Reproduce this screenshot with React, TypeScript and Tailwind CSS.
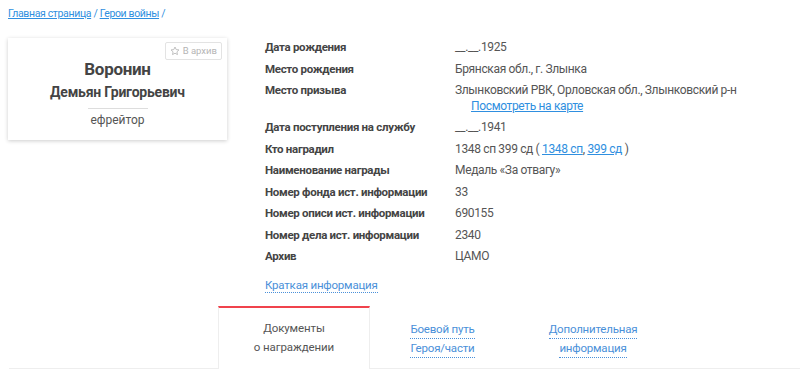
import React from "react";

const rows: { label: string; value: React.ReactNode; extra?: boolean }[] = [
  { label: "Дата рождения", value: "__.__.1925" },
  { label: "Место рождения", value: "Брянская обл., г. Злынка" },
  {
    label: "Место призыва",
    value: "Злынковский РВК, Орловская обл., Злынковский р-н",
    extra: true,
  },
  { label: "Дата поступления на службу", value: "__.__.1941" },
  {
    label: "Кто наградил",
    value: (
      <>
        1348 сп 399 сд ({" "}
        <a className="text-[#2f8fe0] underline">1348 сп</a>,{" "}
        <a className="text-[#2f8fe0] underline">399 сд</a> )
      </>
    ),
  },
  { label: "Наименование награды", value: "Медаль «За отвагу»" },
  { label: "Номер фонда ист. информации", value: "33" },
  { label: "Номер описи ист. информации", value: "690155" },
  { label: "Номер дела ист. информации", value: "2340" },
  { label: "Архив", value: "ЦАМО" },
];

function Star() {
  return (
    <svg width="10" height="10" viewBox="0 0 24 24" fill="none" stroke="#b5b5b5" strokeWidth="2" strokeLinejoin="round">
      <path d="M12 2.5l2.9 6.1 6.6.8-4.9 4.6 1.3 6.6L12 17.3l-5.9 3.3 1.3-6.6-4.9-4.6 6.6-.8z" />
    </svg>
  );
}

export default function App() {
  return (
    <div
      className="w-[800px] h-[379px] bg-white overflow-hidden text-[#555] whitespace-nowrap"
      style={{ fontFamily: "Roboto, 'Noto Sans', sans-serif" }}
    >
      <div className="pt-[6px] pl-[8px] text-[10.5px] leading-[16px] tracking-[-0.35px] text-[#2f8fe0]">
        <a className="underline">Главная страница</a> / <a className="underline">Герои войны</a> /
      </div>
      <div className="flex mt-[16px]">
        <div className="w-[219px] ml-[8px] h-[102px] bg-white shadow-[0_1px_4px_rgba(0,0,0,0.2)] relative flex flex-col items-center shrink-0">
          <div className="absolute top-[4px] right-[5px] h-[18px] px-[4px] border border-[#e3e3e3] rounded-[2px] flex items-center gap-[3px] text-[9.5px] text-[#b5b5b5]">
            <Star />
            <span>В архив</span>
          </div>
          <div className="mt-[18px] text-[17px] leading-[26px] font-bold text-[#444] tracking-[-0.3px]">Воронин</div>
          <div className="text-[14px] leading-[20px] font-bold text-[#444] tracking-[-0.2px]">Демьян Григорьевич</div>
          <div className="w-[60px] h-px bg-[#ddd] mt-[6px]" />
          <div className="mt-[2px] text-[12px] leading-[18px] text-[#555]">ефрейтор</div>
        </div>
        <div className="ml-[38px] -mt-[1px]">
          <div className="flex flex-col text-[12px]">
            {rows.map((r) => (
              <div key={r.label} className="flex leading-[21.5px]">
                <div className="w-[190px] text-[11.5px] font-bold text-[#444] tracking-[-0.3px]">{r.label}</div>
                <div className="text-[#555] tracking-[-0.35px]">
                  <div>{r.value}</div>
                  {r.extra && (
                    <div className="pl-[16px] leading-[15.5px] -mt-[3px] mb-[3px]">
                      <a className="text-[#2f8fe0] underline">Посмотреть на карте</a>
                    </div>
                  )}
                </div>
              </div>
            ))}
          </div>
          <div className="mt-[8px] text-[11.5px] leading-[18px] tracking-[-0.2px]">
            <span className="text-[#4a90d9] border-b border-dotted border-[#4a90d9]">Краткая информация</span>
          </div>
        </div>
      </div>
      <div className="flex mt-[12px] text-[11.5px] leading-[19px] tracking-[-0.1px]">
        <div className="w-[209px] ml-[9px] border-b border-[#eee]" />
        <div className="w-[152px] h-[63px] border-t-2 border-[#f0434c] border-x border-x-[#eee] flex flex-col items-center justify-center text-[#555]">
          <div>Документы</div>
          <div>о награждении</div>
        </div>
        <div className="flex-1 border-b border-[#eee] flex items-start pt-[14px] tracking-[-0.2px]">
          <div className="w-[145px] flex flex-col items-center text-[#4a90d9]">
            <span className="border-b border-dotted border-[#4a90d9] leading-[18px]">Боевой путь</span>
            <span className="border-b border-dotted border-[#4a90d9] leading-[18px]">Героя/части</span>
          </div>
          <div className="w-[156px] flex flex-col items-center text-[#4a90d9]">
            <span className="border-b border-dotted border-[#4a90d9] leading-[18px]">Дополнительная</span>
            <span className="border-b border-dotted border-[#4a90d9] leading-[18px]">информация</span>
          </div>
        </div>
      </div>
    </div>
  );
}
